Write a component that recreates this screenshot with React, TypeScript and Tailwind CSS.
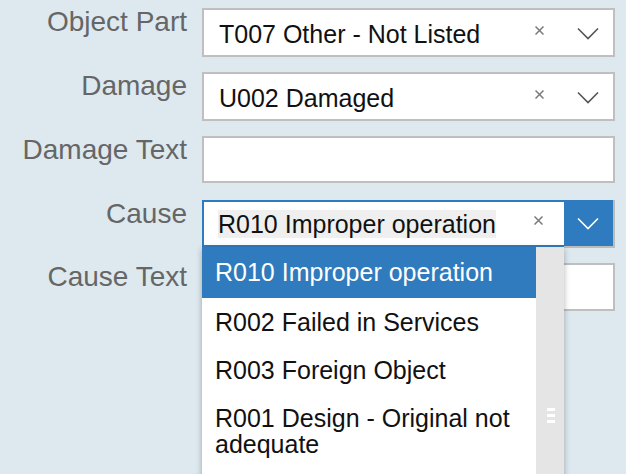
import React from 'react';

const font = { fontFamily: '"Liberation Sans", Arial, sans-serif' };

const Chevron = ({ color }: { color: string }) => (
  <svg width="22" height="13" viewBox="0 0 22 13" fill="none">
    <path d="M1 1.5 L11 11.5 L21 1.5" stroke={color} strokeWidth="1.6" />
  </svg>
);

const Cross = () => (
  <svg width="9" height="9" viewBox="0 0 9 9" fill="none">
    <path d="M0.5 0.5 L8.5 8.5 M8.5 0.5 L0.5 8.5" stroke="#7a7a7a" strokeWidth="1.5" />
  </svg>
);

const Label = ({ children }: { children: React.ReactNode }) => (
  <div className="w-[187px] shrink-0 text-right text-[28px] leading-[28px] text-[#666]">{children}</div>
);

const SelectBox = ({ value }: { value: string }) => (
  <div className="ml-[15px] flex h-[49px] w-[413px] items-center border-2 border-[#bfbfbf] bg-white">
    <span className="flex-1 pl-[15px] pt-[3px] text-[25px] leading-[27px] text-[#111]">{value}</span>
    <span className="mr-[28px] -mt-[4px] flex w-[20px] justify-center">
      <Cross />
    </span>
    <span className="mr-[14px] flex w-[22px] justify-center pt-[2px]">
      <Chevron color="#555" />
    </span>
  </div>
);

const options = [
  'R010 Improper operation',
  'R002 Failed in Services',
  'R003 Foreign Object',
  'R001 Design - Original not adequate',
];

export default function App() {
  return (
    <div className="h-[474px] w-[626px] overflow-hidden bg-[#dde9ef]" style={font}>
      <div className="pt-[8px]">
        <div className="flex items-start">
          <Label>Object Part</Label>
          <SelectBox value="T007 Other - Not Listed" />
        </div>

        <div className="mt-[15px] flex items-start">
          <Label>Damage</Label>
          <SelectBox value="U002 Damaged" />
        </div>

        <div className="mt-[15px] flex items-start">
          <Label>Damage Text</Label>
          <div className="ml-[15px] h-[47px] w-[413px] border-2 border-[#bfbfbf] bg-white" />
        </div>

        <div className="relative z-10 mt-[17px] flex items-start">
          <Label>Cause</Label>
          <div className="relative ml-[15px] flex h-[48px] w-[413px]">
            <div className="flex h-[47px] w-[362px] items-center border-2 border-r-0 border-[#2f7bbf] bg-white">
              <span className="flex-1 pl-[14px] pt-[2px] text-[25px] leading-[27px] text-[#111]">
                <span className="bg-[#efefef]">R010 Improper operation</span>
              </span>
              <span className="mr-[16px] -mt-[6px] flex w-[20px] justify-center">
                <Cross />
              </span>
            </div>
            <div className="flex h-[48px] w-[51px] items-center justify-center border-r-2 border-b-2 border-[#bcbcbc] bg-[#2f7bbf] pr-[1px]">
              <Chevron color="#ffffff" />
            </div>

            <div className="absolute left-0 top-[47px] flex h-[240px] w-[362px] bg-white shadow-[0_2px_6px_rgba(0,0,0,0.3)]">
              <ul className="flex-1">
                {options.map((o, i) => (
                  <li
                    key={o}
                    className={
                      i === 0
                        ? 'bg-[#2f7bbd] px-[13px] py-[12px] text-[25px] leading-[27px] text-white'
                        : 'px-[13px] py-[11px] text-[25px] leading-[26px] text-[#111]'
                    }
                  >
                    {o}
                  </li>
                ))}
              </ul>
              <div className="flex w-[28px] flex-col items-center bg-[#e5e5e5] pt-[161px]">
                <div className="flex flex-col gap-[3px] pl-[2px]">
                  <span className="block h-[3px] w-[8px] bg-white" />
                  <span className="block h-[3px] w-[8px] bg-white" />
                  <span className="block h-[3px] w-[8px] bg-white" />
                </div>
              </div>
            </div>
          </div>
        </div>

        <div className="mt-[15px] flex items-start">
          <Label>Cause Text</Label>
          <div className="ml-[15px] h-[48px] w-[413px] border-2 border-[#bfbfbf] bg-white" />
        </div>
      </div>
    </div>
  );
}
